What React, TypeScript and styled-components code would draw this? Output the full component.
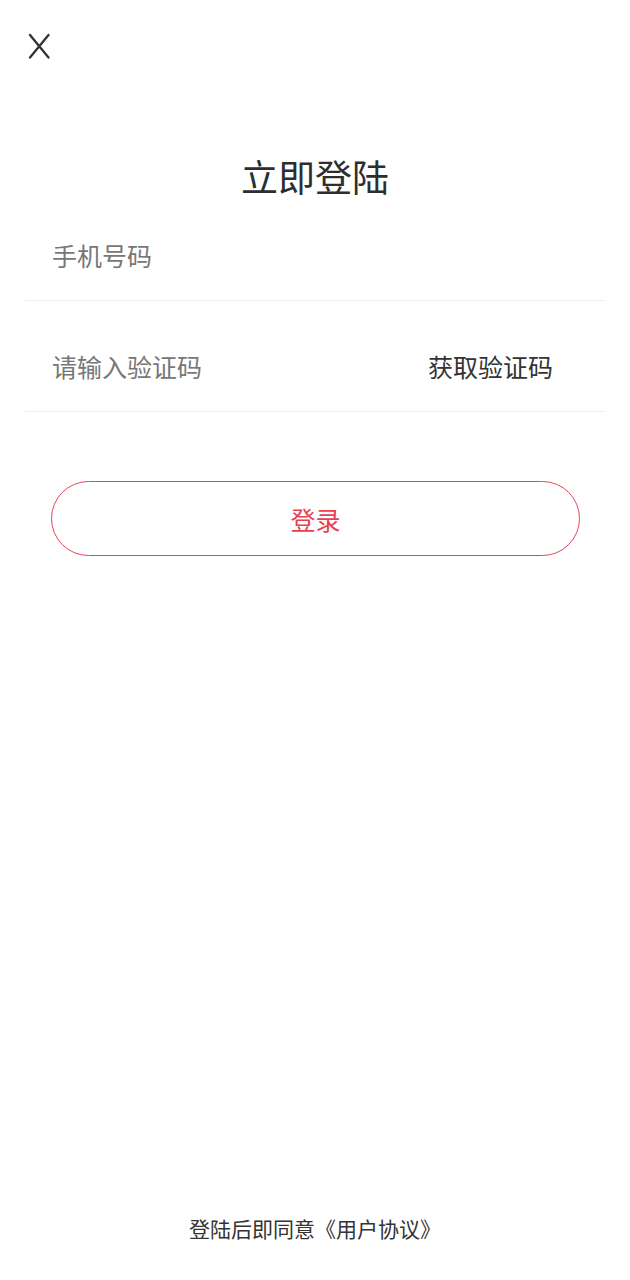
import React from 'react'
import styled, { createGlobalStyle } from 'styled-components'

const GlobalStyle = createGlobalStyle`
  html, body {
    margin: 0;
    padding: 0;
    background: #ffffff;
  }
  body {
    font-family: "Noto Sans CJK SC", "Noto Sans", sans-serif;
  }
`

const Page = styled.div`
  display: flex;
  flex-direction: column;
  min-height: 100vh;
  box-sizing: border-box;
`

const Header = styled.div`
  height: 92px;
  display: flex;
  align-items: center;
  padding-left: 28px;
`

const CloseButton = styled.button`
  width: 22px;
  height: 26px;
  padding: 0;
  border: none;
  background: none;
  display: flex;
  align-items: center;
  justify-content: center;
  margin-top: -1px;
`

const Title = styled.h1`
  margin: 64px 0 0;
  font-size: 37px;
  line-height: 40px;
  font-weight: 400;
  color: #2e2e2e;
  text-align: center;
`

const Form = styled.div`
  margin: 0 25px;
`

const Row = styled.div<{ $height: number }>`
  height: ${p => p.$height}px;
  box-sizing: border-box;
  display: flex;
  align-items: flex-end;
  justify-content: space-between;
  padding: 0 52px 30px 27px;
  border-bottom: 1px solid #ededed;
`

const Placeholder = styled.span`
  font-size: 25px;
  line-height: 30px;
  color: #777777;
`

const CodeLink = styled.span`
  font-size: 25px;
  line-height: 30px;
  color: #333333;
`

const LoginButton = styled.button`
  margin: 69px 50px 0 51px;
  height: 75px;
  border: 1px solid #e0485a;
  border-radius: 38px;
  background: #ffffff;
  color: #e8404f;
  font-family: inherit;
  font-size: 25px;
  line-height: 30px;
`

const Footer = styled.div`
  margin-top: auto;
  padding-bottom: 38px;
  text-align: center;
  font-size: 21px;
  line-height: 28px;
  color: #333333;
`

export default function App() {
  return (
    <>
      <GlobalStyle />
      <Page>
        <Header>
          <CloseButton aria-label="关闭">
            <svg width="22" height="26" viewBox="0 0 22 26">
              <path d="M2 2L20.5 24.5M20.5 2L2 24.5" stroke="#333" strokeWidth="2.3" strokeLinecap="round" fill="none" />
            </svg>
          </CloseButton>
        </Header>
        <Title>立即登陆</Title>
        <Form>
          <Row $height={105}>
            <Placeholder>手机号码</Placeholder>
          </Row>
          <Row $height={111}>
            <Placeholder>请输入验证码</Placeholder>
            <CodeLink>获取验证码</CodeLink>
          </Row>
        </Form>
        <LoginButton>登录</LoginButton>
        <Footer>登陆后即同意《用户协议》</Footer>
      </Page>
    </>
  )
}
